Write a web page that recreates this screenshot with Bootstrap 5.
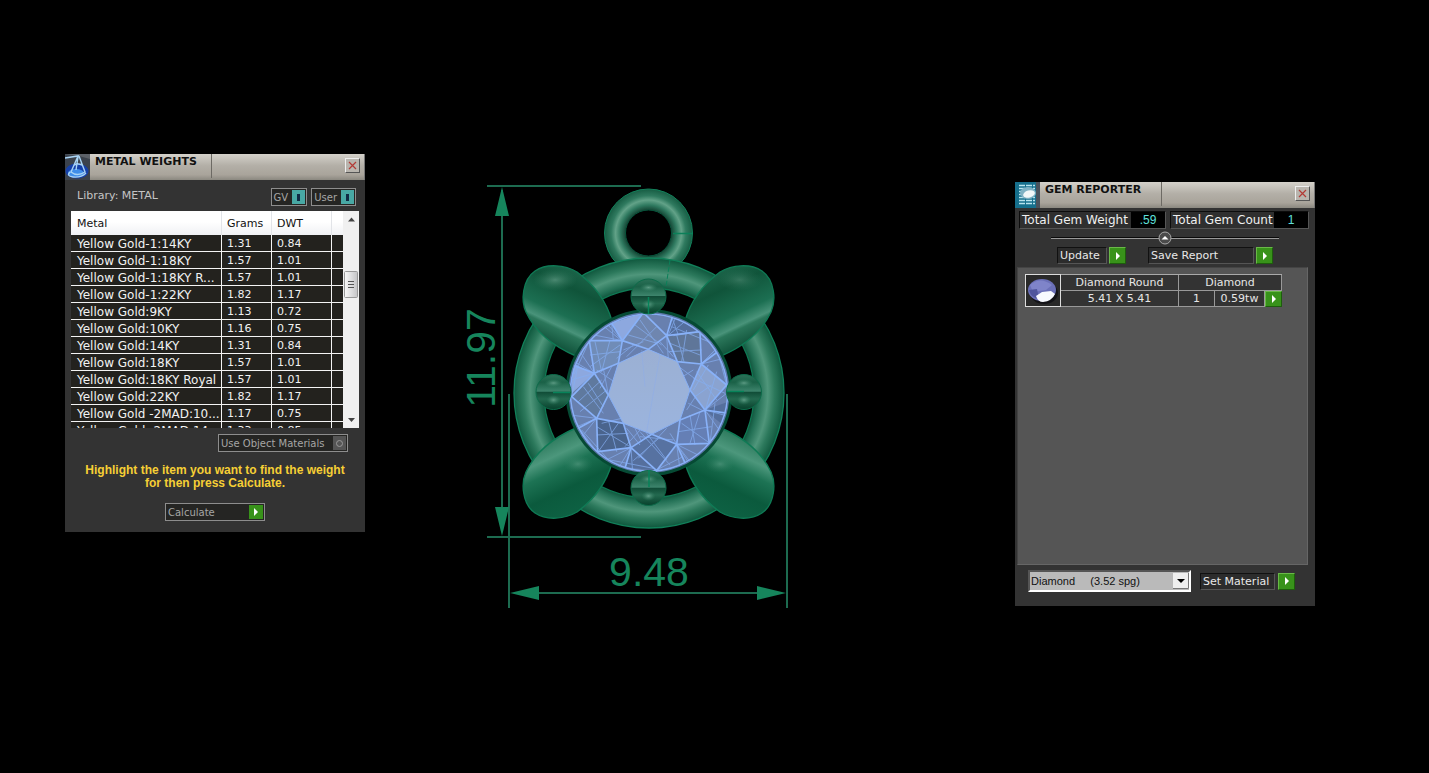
<!DOCTYPE html>
<html lang="en">
<head>
<meta charset="utf-8">
<meta name="viewport" content="width=device-width, initial-scale=1">
<title>Metal Weights and Gem Reporter</title>
<link href="https://cdn.jsdelivr.net/npm/bootstrap@5.3.0/dist/css/bootstrap.min.css" rel="stylesheet">
<style>
body{background:#000;color:#e8e8e8;font:11px/16px "DejaVu Sans",Verdana,sans-serif}
.desk{padding:154px 114px 60px 65px}
.tool{width:300px;background:#333}
.tool-gem{margin-top:28px}
.model{margin:21px 0 0 95px;width:340px}
.bar{height:26px;background:linear-gradient(#d4d1ca,#b3afa7 45%,#a9a49b 80%,#8b8880);border-right:1px solid #777}
.bar-title{width:122px;border-right:1px solid #6d6a64;font-size:11px;line-height:16px;font-weight:700;color:#111;padding-left:5px;margin:0 0 2px}
.bar svg{width:25px;height:26px;flex:none}
.bar .x-btn svg{width:13px;height:13px}
.x-btn{width:15px;height:15px;padding:0;border:1px solid;border-color:#eee #555 #555 #eee;background:#b9b5ae;line-height:0;margin:4px 4px 0 0}
.lib{color:#c4c4c4;padding:8px 9px 5px 12px}
.tgl{height:18px;padding:0 1px 0 2px;border:1px solid #8d8d8d;background:#252523;color:#a5a5a5;font-size:10px;line-height:16px}
.tgl span:first-child{white-space:nowrap;padding-top:2px;line-height:14px}
.tgl i{width:13px;height:14px;background:#48a8a4;display:grid;place-items:center}
.tgl i::after{content:"";width:3px;height:7px;background:#102a44}
.tgl i.off{background:#555}
.tgl i.off::after{width:7px;height:7px;border:1px solid #999;border-radius:50%;background:none}
.tgl-use{width:130px}
.tgl-calc{width:100px}
.go{width:17px;height:17px;padding:0;border:1px solid;border-color:#6ab848 #1d5e0c #1d5e0c #6ab848;background:#38921a;display:grid;place-items:center;flex:none}
.go::after{content:"";border-left:4px solid #fff;border-top:4px solid transparent;border-bottom:4px solid transparent}
.tgl .go{width:14px;height:14px;border:0}
.gridbox{margin:0 6px;height:217px;overflow:hidden}
.weights{table-layout:fixed;width:100%;border-collapse:separate;border-spacing:0;color:#f2f2f2;background:#23221e}
.weights th{height:24px;padding:1px 0 0 6px;background:linear-gradient(#fff 45%,#f0f1f4);color:#111;font-weight:400;border-right:1px solid #e2e4e8;white-space:nowrap}
.weights td{height:17px;line-height:14px;padding:2px 0 0 6px;border-right:1px solid #f4f4f4;border-bottom:1px solid #f4f4f4;white-space:nowrap}
.weights td:first-child{font-size:12px}
.weights th:nth-child(n+2),.weights td:nth-child(n+2){padding-left:5px}
.weights td:last-child,.weights th:last-child{border-right:0}
.scroller{width:16px;background:#f0f0f0;flex:none}
.note{color:#f6cf35;font:bold 12px/13px "Liberation Sans",Arial,sans-serif}
.stat{height:18px;border:1px solid;border-color:#0c0c0c #555 #555 #0c0c0c;color:#f0f0f0;background:#2f2f2f;font-size:12px;line-height:16px;white-space:nowrap}
.stat label{padding-left:2px}
.stat input{width:34px;border:0;padding:0;background:#000;color:#5fe0dc;text-align:center;font:12px/16px "Liberation Sans",Arial,sans-serif}
.split{height:17px}
.split svg{width:228px;height:17px}
.cmd{padding:0;border:0;background:none;color:inherit;display:flex;align-items:center;gap:2px}
.cmd b{font-weight:400;text-align:left;height:17px;line-height:16px;border:1px solid;border-color:#111 #555 #555 #111;background:#2c2c2c;padding-left:2px;white-space:nowrap}
.list{margin:0 7px 0 2px;height:298px;background:#555;border:1px solid;border-color:#444 #666 #666 #444;padding:6px 25px 0 7px}
.thumb{width:36px;height:33px;border:1px solid #ddd;background:#292929;flex:none}
.gems{table-layout:fixed;border-collapse:separate;border-spacing:0;text-align:center;color:#e6e6e6;background:#333;border-top:1px solid #aaa;width:100%}
.gems td,.gems th{padding:0;line-height:15px;height:16px;font-weight:400;border-right:1px solid #999;border-bottom:1px solid #999}
.gems td:last-child{border:0}
.gems .go{height:16px}
.mat{height:22px;width:163px}
.mat select{display:block;appearance:none;border:2px solid;border-color:#555 #fff #fff #555;border-radius:0;background:#bababa;color:#111;font:11px/18px "Liberation Sans",Arial,sans-serif;padding:0 0 0 1px;width:100%;height:22px}
.mat svg{right:2px;top:3px;pointer-events:none}
</style>
</head>
<body>
<main class="desk d-flex align-items-start">

<section class="tool flex-shrink-0" aria-label="Metal Weights">
  <header class="bar d-flex">
    <svg viewBox="0 0 25 26" aria-hidden="true"><path fill="#3b424c" d="M0 0h25v26H0z"/><path fill="#5c6168" d="M0 0h25v5L14 2z"/><ellipse cx="12" cy="17" rx="11.500" ry="7.500" fill="#1540a8"/><ellipse cx="11" cy="19" rx="8" ry="4" fill="#3f8eea"/><path d="M0 4L13 2L6 18Q12 23 20 18L14 2M13 3l-2 13M5 18q-4 4 3 5 8 1 13-4M9 11q4-2 8 0" fill="none" stroke="#a9d4f5" stroke-width="1.400"/></svg>
    <h1 class="bar-title">METAL WEIGHTS</h1>
    <button class="x-btn ms-auto" aria-label="Close"><svg viewBox="0 0 13 13"><path d="M3 3l7 7M10 3l-7 7" stroke="#b33a35" stroke-width="1.200"/></svg></button>
  </header>
  <div class="lib d-flex justify-content-between">
    <span>Library: METAL</span>
    <div class="d-flex gap-1">
      <button class="tgl d-flex align-items-center gap-1" aria-pressed="true"><span>GV</span><i></i></button>
      <button class="tgl d-flex align-items-center gap-1" aria-pressed="true"><span>User</span><i></i></button>
    </div>
  </div>
  <div class="gridbox d-flex">
    <div class="flex-grow-1">
    <table class="weights">
      <colgroup><col><col style="width:50px"><col style="width:60px"><col style="width:11px"></colgroup>
      <thead><tr><th>Metal</th><th>Grams</th><th>DWT</th><th></th></tr></thead>
      <tbody>
      <tr><td>Yellow Gold-1:14KY</td><td>1.31</td><td>0.84</td><td></td></tr>
      <tr><td>Yellow Gold-1:18KY</td><td>1.57</td><td>1.01</td><td></td></tr>
      <tr><td>Yellow Gold-1:18KY R...</td><td>1.57</td><td>1.01</td><td></td></tr>
      <tr><td>Yellow Gold-1:22KY</td><td>1.82</td><td>1.17</td><td></td></tr>
      <tr><td>Yellow Gold:9KY</td><td>1.13</td><td>0.72</td><td></td></tr>
      <tr><td>Yellow Gold:10KY</td><td>1.16</td><td>0.75</td><td></td></tr>
      <tr><td>Yellow Gold:14KY</td><td>1.31</td><td>0.84</td><td></td></tr>
      <tr><td>Yellow Gold:18KY</td><td>1.57</td><td>1.01</td><td></td></tr>
      <tr><td>Yellow Gold:18KY Royal</td><td>1.57</td><td>1.01</td><td></td></tr>
      <tr><td>Yellow Gold:22KY</td><td>1.82</td><td>1.17</td><td></td></tr>
      <tr><td>Yellow Gold -2MAD:10...</td><td>1.17</td><td>0.75</td><td></td></tr>
      <tr><td>Yellow Gold -2MAD:14...</td><td>1.33</td><td>0.85</td><td></td></tr>
      </tbody>
    </table>
    </div>
    <svg class="scroller" viewBox="0 0 16 217" aria-hidden="true"><defs><linearGradient id="th"><stop offset="0" stop-color="#fafafa"/><stop offset="1" stop-color="#c4c4c6"/></linearGradient></defs><path d="M5 10.500l3.500-4 3.500 4zM5 207l3.500 4 3.500-4z" fill="#444"/><rect x="1.500" y="60.500" width="13" height="26" rx="1" fill="url(#th)" stroke="#999"/><path d="M5 70.500h6M5 73.500h6M5 76.500h6" stroke="#555"/></svg>
  </div>
  <div class="d-flex justify-content-end" style="padding:6px 17px 0 0">
    <button class="tgl tgl-use d-flex align-items-center justify-content-between" aria-pressed="false"><span>Use Object Materials</span><i class="off"></i></button>
  </div>
  <p class="note text-center mb-0" style="margin-top:12px">Highlight the item you want to find the weight<br>for then press Calculate.</p>
  <div class="d-flex justify-content-center" style="padding:13px 0 11px">
    <button class="tgl tgl-calc d-flex align-items-center justify-content-between"><span>Calculate</span><span class="go"></span></button>
  </div>
</section>

<svg class="model flex-shrink-0" viewBox="460 175 340 440" role="img" aria-label="Pendant model, 11.97 by 9.48">
  <defs>
    <radialGradient id="ring" gradientUnits="userSpaceOnUse" cx="649" cy="393" r="135"><stop offset=".77" stop-color="#0f4f38"/><stop offset=".81" stop-color="#216f54"/><stop offset=".88" stop-color="#4f967b"/><stop offset=".93" stop-color="#2c795c"/><stop offset="1" stop-color="#0f573d"/></radialGradient>
    <radialGradient id="bail" gradientUnits="userSpaceOnUse" cx="648.500" cy="233" r="44.500"><stop offset=".5" stop-color="#123f2f"/><stop offset=".63" stop-color="#2f7a60"/><stop offset=".74" stop-color="#62a288"/><stop offset=".84" stop-color="#2f7a5f"/><stop offset="1" stop-color="#155a41"/></radialGradient>
    <linearGradient id="petal" gradientUnits="userSpaceOnUse" x1="582" y1="270" x2="546" y2="346"><stop offset="0" stop-color="#1d664b"/><stop offset=".25" stop-color="#10543a"/><stop offset=".58" stop-color="#1c6f52"/><stop offset=".72" stop-color="#49937a"/><stop offset=".76" stop-color="#2b775b"/><stop offset="1" stop-color="#0b4b34"/></linearGradient>
    <linearGradient id="petalB" gradientUnits="userSpaceOnUse" x1="582" y1="270" x2="546" y2="346"><stop offset="0" stop-color="#0e6244"/><stop offset=".35" stop-color="#0b5a3d"/><stop offset=".6" stop-color="#1d7354"/><stop offset=".76" stop-color="#4c977c"/><stop offset="1" stop-color="#287558"/></linearGradient>
    <radialGradient id="glow"><stop offset="0" stop-color="#7fb8a3" stop-opacity=".65"/><stop offset="1" stop-color="#3c8a6d" stop-opacity="0"/></radialGradient>
    <linearGradient id="bead" x1="0" y1="0" x2="0" y2="1"><stop offset="0" stop-color="#2c7158"/><stop offset=".22" stop-color="#1a6147"/><stop offset=".48" stop-color="#3d846c"/><stop offset=".5" stop-color="#104c37"/><stop offset=".7" stop-color="#23694f"/><stop offset="1" stop-color="#07402b"/></linearGradient>
    <linearGradient id="table" x1="0" y1="0" x2="0" y2="1"><stop offset="0" stop-color="#9bb0d3"/><stop offset="1" stop-color="#9bb4de"/></linearGradient>
    <clipPath id="round"><circle cx="267" cy="278" r="238"/></clipPath>
    <path id="leaf" d="M612 321C606 300 592 283 577 272C565 265 547 263 535 271C522 280 521 301 526 312C534 329 550 345 576 356Z"/>
    <g id="ball"><circle r="17.500" fill="url(#bead)" stroke="#0d6b4a"/><ellipse cy="-9" rx="9" ry="4" fill="url(#glow)"/><ellipse cy="8" rx="7" ry="5" fill="url(#glow)"/></g>
  </defs>

  <circle cx="648.500" cy="233" r="33.500" fill="none" stroke="url(#bail)" stroke-width="21"/>
  <circle cx="648.500" cy="233" r="44" fill="none" stroke="#12805a"/><circle cx="648.500" cy="233" r="23" fill="none" stroke="#07543b"/>
  <path d="M673 233.500h20" stroke="#0b8059" stroke-width="1.500"/>
  <circle cx="649" cy="393" r="120" fill="none" stroke="url(#ring)" stroke-width="30"/>
  <circle cx="649" cy="393" r="135" fill="none" stroke="#12805a" stroke-width="1.300"/><circle cx="649" cy="393" r="105" fill="none" stroke="#0f7853" stroke-width="1.300"/>
  <path d="M670 260l-4 27" stroke="#0b8059" stroke-dasharray="5 2"/>

  <g stroke="#0f7a55" stroke-width="1.400">
    <use href="#leaf" fill="url(#petal)"/>
    <use href="#leaf" fill="url(#petal)" transform="matrix(-1 0 0 1 1297 0)"/>
    <use href="#leaf" fill="url(#petalB)" transform="matrix(1 0 0 -1 0 784)"/>
    <use href="#leaf" fill="url(#petalB)" transform="matrix(-1 0 0 -1 1297 784)"/>
  </g>
  <ellipse cx="555" cy="280" rx="22" ry="11" fill="url(#glow)" opacity=".8"/><ellipse cx="740" cy="280" rx="22" ry="11" fill="url(#glow)" opacity=".5"/>
  <ellipse cx="578" cy="464" rx="15" ry="9" fill="url(#glow)" opacity=".6"/><ellipse cx="720" cy="464" rx="15" ry="9" fill="url(#glow)" opacity=".6"/>

  <circle cx="649" cy="392.500" r="82" fill="#5d76a8" stroke="#064a34" stroke-width="3"/>
  <g transform="translate(560 300) scale(.3333)" clip-path="url(#round)">
    <circle cx="267" cy="278" r="240" fill="#6980b0"/>
    <g stroke="none">
      <path fill="#7087b0" d="M265 148L187 122L255 38L320 107Z"/>
      <path fill="#607799" d="M352 185L320 107L337 50L420 95L424 192Z"/>
      <path fill="#8ba3d0" d="M390 270L424 192L500 255L435 330Z"/>
      <path fill="#657fb5" d="M360 360L435 330L448 430L350 433Z"/>
      <path fill="#5872a2" d="M275 403L350 433L285 512L213 443Z"/>
      <path fill="#4b648e" d="M190 370L213 443L113 455L110 355Z"/>
      <path fill="#60799f" d="M145 285L110 355L35 290L103 220Z"/>
      <path fill="#718cb7" d="M175 190L103 220L88 122L187 122Z"/>
      <path fill="#8da9df" d="M187 122L155 70L250 38ZM103 220L38 190L35 280Z"/>
      <path fill="#566f9d" d="M337 50L420 95L320 107ZM435 330L505 305L500 385ZM213 443L285 512L195 500Z"/>
    </g>
    <g fill="none" stroke="#86aff2" stroke-width="3" opacity=".7">
      <path d="M205 105l87 25M225 75l80 60M290 80l-90 90M240 60l70 100M330 130l90 35M325 155l100-5M350 105l22 80M380 90l-15 95M335 80l160 65M420 95l75 85M350 45l-25 60M380 60l-60 50M424 192l70-70M424 192l80-20"/>
      <path d="M445 195l-45 75M470 215l-35 120M400 235l95 45M410 215l60 85M405 290l50-35M435 330l65-50M435 330l75 20M435 330l50 70M385 310l50 25M380 330l30-45M390 345l15 90M420 335l-30 95M355 395l100-15M365 370l85 60M350 433l90 45M350 433l50 65M350 433l10 75M330 400l60 95"/>
      <path d="M320 385l-85 90M340 420l-100-10M300 412l-80 70M260 400l60 80M240 395l90 100M213 443l-80 40M213 443l-40 65M213 443l5 75M240 390l-45 50M200 385l40 50M145 360l25 95M175 370l-60 85M110 405l95-5M110 380l100 60M110 355l-70 30M110 355l-80-10M110 355l-60 75M85 250l45 70M70 260l60 80M125 240l-70 65M140 270l-80 65"/>
      <path d="M103 220l-60-35M103 220l-70 20M103 220l-50-75M110 210l60 40M130 205l15 80M155 200l-35 65M90 165l90-10M105 125l20 90M150 120l-25 95M90 200l90-65M187 122l-100-20M187 122l-50-55M170 175l50-40M190 150l60-25M300 125l40 45M320 107l5 70M400 210l-40 25M410 240l-60-45M225 385l20 40M185 355l-60 15"/>
      <path d="M88 122l-45 100M130 78l55 44M155 70l5 50M335 50l20 55M420 95l-80 12M470 145l-45 45M500 255l-20-75M448 430l50-65M465 310l-15 120M285 512l80-40M110 455l-60-80M65 390l90 100M35 290l20-100M150 480l130 25"/>
    </g>
    <path d="M265 148L352 185L390 270L360 360L275 403L190 370L145 285L175 190Z" fill="url(#table)" stroke="#88b0f6" stroke-width="3"/>
    <path d="M300 165l-40 230M245 150l10 110" stroke="#88aaf0" stroke-width="2" opacity=".55"/>
    <path d="M265 148L320 107L352 185L424 192L390 270L435 330L360 360L350 433L275 403L213 443L190 370L110 355L145 285L103 220L175 190L187 122ZM187 122L250 38L320 107L337 50M320 107L420 95L424 192L500 255L435 330L448 430L350 433L290 512L213 443L113 455L110 355L35 290L103 220L88 122L187 122L155 70M424 192L480 150M435 330L505 340M350 433L380 500M213 443L195 505M110 355L55 385M103 220L38 195" fill="none" stroke="#88b1f8" stroke-width="5" stroke-linejoin="round"/>
    <circle cx="267" cy="278" r="236" fill="none" stroke="#86aef5" stroke-width="5"/>
  </g>
  <use href="#ball" x="648.500" y="296.500"/><use href="#ball" x="648.500" y="488"/><use href="#ball" x="553.500" y="392"/><use href="#ball" x="744" y="392"/>
  <path d="M648.500 297v17M649 470v17M553 392.500h17M727 391.500h17" stroke="#07835a" stroke-width="1.500"/>

  <g stroke="#1d6b50" stroke-width="2" fill="none"><path d="M487 186h154M487 537h154M502 190v342M509 394v214M787 394v214M514 593h268"/></g>
  <path fill="#16855c" d="M502 187l7 29h-14zM502 536l7-29h-14zM510 593l29-7v14zM786 593l-29-7v14z"/>
  <g fill="#16855c" font-family="Liberation Sans, Arial, sans-serif" font-size="41"><text x="649" y="586" text-anchor="middle">9.48</text><text transform="translate(495 358) rotate(-90)" text-anchor="middle">11.97</text></g>
</svg>

<section class="tool tool-gem flex-shrink-0 ms-auto" aria-label="Gem Reporter">
  <header class="bar d-flex">
    <svg viewBox="0 0 25 26" aria-hidden="true"><path fill="#166f8c" d="M0 0h25v26H0z"/><path fill="#4a525c" d="M21 0h4v26h-4z"/><path d="M4 3.500h16M4 6.500h16M4 9.500h16M4 12.500h16M4 15.500h16M4 18.500h16M4 21.500h16" stroke="#b9e4ee" stroke-width="1.500" stroke-dasharray="6 1"/><ellipse cx="13" cy="11" rx="8" ry="6" fill="#7fb2c4"/><ellipse cx="14" cy="12" rx="6" ry="3.500" fill="#f1f7f8" transform="rotate(-15 14 12)"/></svg>
    <h1 class="bar-title">GEM REPORTER</h1>
    <button class="x-btn ms-auto" aria-label="Close"><svg viewBox="0 0 13 13"><path d="M3 3l7 7M10 3l-7 7" stroke="#b33a35" stroke-width="1.200"/></svg></button>
  </header>
  <div class="d-flex gap-1" style="padding:3px 6px 0 4px">
    <div class="stat d-flex justify-content-between" style="width:147px"><label for="gw">Total Gem Weight</label><input id="gw" value=".59" readonly></div>
    <div class="stat d-flex justify-content-between flex-grow-1"><label for="gc">Total Gem Count</label><input id="gc" value="1" readonly></div>
  </div>
  <div class="split d-flex justify-content-center"><svg viewBox="0 0 228 17" aria-hidden="true"><path d="M0 9.500h228" stroke="#999"/><path d="M0 8.500h228" stroke="#0a0a0a"/><circle cx="114" cy="9" r="6" fill="#4b4b4b" stroke="#aaa"/><path d="M110.500 10.500l3.500-3.500 3.500 3.500z" fill="#fff"/></svg></div>
  <div class="d-flex" style="padding:1px 42px 3px 42px">
    <button class="cmd"><b style="width:50px">Update</b><span class="go"></span></button>
    <button class="cmd ms-auto"><b style="width:106px">Save Report</b><span class="go"></span></button>
  </div>
  <div class="list">
    <div class="d-flex">
      <svg class="thumb" viewBox="0 0 34 31" role="img" aria-label="Round diamond"><ellipse cx="18" cy="18" rx="14" ry="11" fill="#141418"/><ellipse cx="16" cy="15" rx="14" ry="11" fill="#6b70b8"/><path d="M4 10q10-9 22 0l-6 5-13 2z" fill="#7f84c9"/><path d="M3 15l8-1 2 10q-8-1-10-9z" fill="#4f559c"/><path d="M10 21l6-4 9-1 4 3q-3 7-12 8-5 0-7-6z" fill="#f8faff"/></svg>
      <table class="gems">
        <colgroup><col><col style="width:36px"><col style="width:50px"><col style="width:17px"></colgroup>
        <tr><th>Diamond Round</th><th colspan="3">Diamond</th></tr>
        <tr><td>5.41 X 5.41</td><td>1</td><td>0.59tw</td><td><button class="go" aria-label="Select gem"></button></td></tr>
      </table>
    </div>
  </div>
  <div class="d-flex align-items-center" style="padding:5px 20px 14px 13px">
    <div class="mat position-relative"><select aria-label="Material"><option>Diamond&nbsp;&nbsp;&nbsp;&nbsp;&nbsp;(3.52 spg)</option></select><svg class="position-absolute" width="16" height="16" viewBox="0 0 16 16"><path fill="#efefef" d="M0 0h16v16H0z"/><path d="M15.500 0v15.500H0" fill="none" stroke="#777"/><path d="M4 6h8l-4 4z" fill="#000"/></svg></div>
    <button class="cmd ms-auto" style="gap:3px"><b style="width:75px">Set Material</b><span class="go"></span></button>
  </div>
</section>
</main>
<script src="https://cdn.jsdelivr.net/npm/bootstrap@5.3.0/dist/js/bootstrap.bundle.min.js"></script>
</body>
</html>
